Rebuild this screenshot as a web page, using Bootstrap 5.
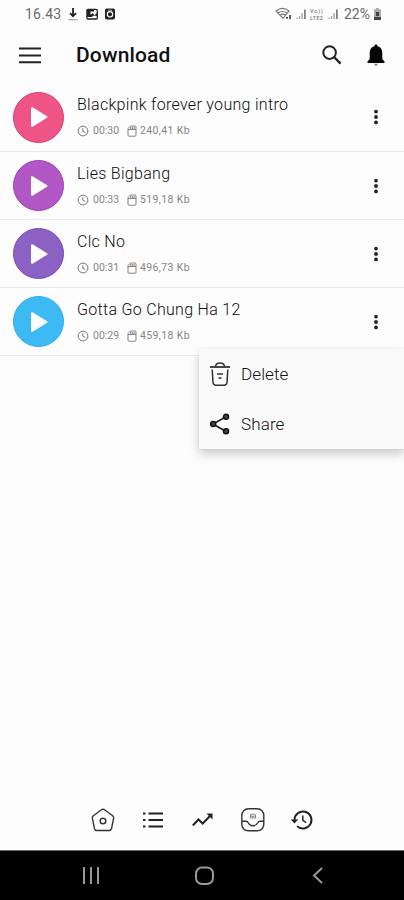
<!DOCTYPE html>
<html lang="en">
<head>
<meta charset="utf-8">
<meta name="viewport" content="width=device-width, initial-scale=1">
<title>Download</title>
<link href="https://cdn.jsdelivr.net/npm/bootstrap@5.3.0/dist/css/bootstrap.min.css" rel="stylesheet">
<style>
body{font-family:Roboto,"Liberation Sans",sans-serif;background:#fdfdfd;color:#222;line-height:1.2}
.phone{width:404px;height:900px}
svg{display:block;flex:none}
.status{height:28px;padding:0 22px 0 25px;color:#6b6b6b;font-size:14px}
.status .clock{letter-spacing:.25px;width:37px;margin-right:6px}
.status .doc{margin-left:6px}
.status .net{margin-left:3px}
.status .bars{margin-left:4px}
.status .charge{margin-left:5px;width:29px}
.topbar{height:55px;padding:0 16px 0 18px}
.topbar h1{font-size:21px;font-weight:500;color:#111;letter-spacing:.15px;margin-left:34px}
.topbar .bell{margin-left:21px}
.track{height:68px;border-bottom:1.5px solid #ebebeb;padding:0 19px 0 13px}
.track:first-child{height:69px}
.play{width:51px;height:51px;border:1px solid;margin-right:13px}
.pink{background:#ef5486;border-color:#e03a70}
.violet{background:#b158c6;border-color:#a03cb8}
.purple{background:#8b62c4;border-color:#7848b4}
.sky{background:#3dbaf4;border-color:#30a8ee}
.info{padding-bottom:2px}
.name{font-size:16px;font-weight:300;color:#0c0c0c;letter-spacing:.3px;line-height:20px;margin-bottom:10px}
.meta{font-size:10.5px;color:#858585;line-height:12px}
.meta .time{width:34px}
.meta .size{letter-spacing:.38px;margin-left:3px}
.menu{left:199px;top:61px;width:205px;height:100px;background:#fafafa;box-shadow:0 5px 10px rgba(0,0,0,.2),0 0 3px rgba(0,0,0,.06);z-index:2}
.menu a{height:50px;padding-left:9px;font-size:17px;font-weight:300;color:#111}
.menu span{margin-left:9px;letter-spacing:.12px}
.tabs{height:60px;padding:0 90px}
.sysbar{height:50px;background:#000;border-top:1px solid #666}
</style>
</head>
<body>
<svg width="0" height="0" class="position-absolute">
<symbol id="tri" viewBox="0 0 18 22"><path d="M2 2.2v17.6L16.5 11z" fill="#fff" stroke="#fff" stroke-width="2" stroke-linejoin="round"/></symbol>
<symbol id="time" viewBox="0 0 12 12"><circle cx="6" cy="6" r="4.9" fill="none" stroke="#777" stroke-width="1"/><path d="M5.8 3.2v3l2.5 1.2" fill="none" stroke="#777"/></symbol>
<symbol id="card" viewBox="0 0 10 12"><path d="M3.4 1H8a1 1 0 0 1 1 1v8.2a1 1 0 0 1-1 1H2a1 1 0 0 1-1-1V3.6zM3.7 2v2M5.4 2v2M7.1 2v2M1 4.5h8" fill="none" stroke="#777" stroke-width=".9"/></symbol>
<symbol id="dots" viewBox="0 0 18 18"><g fill="#222"><circle cx="9" cy="3.6" r="1.9"/><circle cx="9" cy="9" r="1.9"/><circle cx="9" cy="14.4" r="1.9"/></g></symbol>
<symbol id="signal" viewBox="0 0 12 12"><path d="M1 11.5V10M3.8 11.5V8.5M6.6 11.5V5" stroke="#999" stroke-width="1.3"/><path d="M9.7 11.5V1" stroke="#777" stroke-width="1.8"/></symbol>
</svg>
<main class="phone d-flex flex-column overflow-hidden">
  <div class="status d-flex align-items-center">
    <span class="clock">16.43</span>
    <svg width="10" height="14" viewBox="0 0 10 14"><path d="M5 1v8M2 6.2 5 9.3l3-3.1" fill="none" stroke="#222" stroke-width="1.8"/><path d="M.5 12.7h9" stroke="#aaa" stroke-width="1.3"/></svg>
    <svg class="ms-2" width="12" height="12" viewBox="0 0 12 12"><rect x=".9" y="1.4" width="10.4" height="9.6" rx="1.2" fill="none" stroke="#222" stroke-width="1.3"/><path d="M1 1.5h7v2H4.5v3L7 5.2l1.5 2L11 5v3L8 7.5 5.5 9H1z" fill="#222"/></svg>
    <svg class="doc" width="12" height="12" viewBox="0 0 12 12"><rect x="1" y=".5" width="10" height="11" rx="1.8" fill="#222"/><circle cx="6" cy="6.3" r="2.7" fill="none" stroke="#fff" stroke-width="1.2"/><path d="M4 2.2h4" stroke="#aaa"/></svg>
    <div class="ms-auto d-flex align-items-center">
      <svg width="17" height="13" viewBox="0 0 17 13"><g fill="none" stroke="#777" stroke-width="1.1"><path d="M1 4q6.5-5.2 13 0L8 11.5zM3 6q4.5-3 9 0M5 8q2.7-1.8 5.3 0"/></g><path d="M11 10.8h2M15 8v4" stroke="#333" stroke-width="1.6"/></svg>
      <svg class="ms-1" width="11" height="12"><use href="#signal"/></svg>
      <svg class="net" width="14" height="14" viewBox="0 0 14 14"><g fill="#777" font-size="5.5" font-weight="500"><text x="0" y="5.5" textLength="13">Vo))</text><text x="0" y="12.5" textLength="13">LTE2</text></g></svg>
      <svg class="bars" width="11" height="12"><use href="#signal"/></svg>
      <span class="charge">22%</span>
      <svg width="9" height="12" viewBox="0 0 9 12"><path d="M3 0h3v1.3h2V12H1V1.3h2z" fill="#aaa"/><path d="M1 9h7v3H1zM3 4h3v4H3z" fill="#444"/></svg>
    </div>
  </div>
  <header class="topbar d-flex align-items-center">
    <svg width="24" height="18" viewBox="0 0 24 18"><path d="M1 1.5h22M1 8.5h22M1 15.3h22" stroke="#222" stroke-width="2"/></svg>
    <h1 class="mb-0">Download</h1>
    <svg class="ms-auto" width="22" height="22" viewBox="0 0 22 22"><circle cx="8.6" cy="7.6" r="6.3" fill="none" stroke="#222" stroke-width="2"/><path d="m13 12 6.6 6.600" stroke="#222" stroke-width="2.4"/></svg>
    <svg class="bell" width="24" height="24" viewBox="0 0 24 24"><path d="M12 .5c1 0 1.6.7 1.6 1.7C17 3.1 18.3 5.8 18.3 9.5v5.6l2.2 2.3v1.500h-17v-1.500l2.200-2.300V9.500c0-3.700 1.300-6.400 4.700-7.300 0-1 .6-1.700 1.600-1.700z" fill="#050505"/><path d="M10.300 19.800h3.400a1.700 1.900 0 0 1-3.400 0z" fill="#777"/></svg>
  </header>
  <section>
    <div class="track d-flex align-items-center">
      <span class="play pink rounded-circle d-flex align-items-center justify-content-center"><svg width="18" height="22"><use href="#tri"/></svg></span>
      <div class="info"><div class="name">Blackpink forever young intro</div><div class="meta d-flex align-items-center"><svg width="12" height="12" class="me-1"><use href="#time"/></svg><span class="time">00:30</span><svg width="10" height="12"><use href="#card"/></svg><span class="size">240,41 Kb</span></div></div>
      <svg class="ms-auto" width="18" height="18"><use href="#dots"/></svg>
    </div>
    <div class="track d-flex align-items-center">
      <span class="play violet rounded-circle d-flex align-items-center justify-content-center"><svg width="18" height="22"><use href="#tri"/></svg></span>
      <div class="info"><div class="name">Lies Bigbang</div><div class="meta d-flex align-items-center"><svg width="12" height="12" class="me-1"><use href="#time"/></svg><span class="time">00:33</span><svg width="10" height="12"><use href="#card"/></svg><span class="size">519,18 Kb</span></div></div>
      <svg class="ms-auto" width="18" height="18"><use href="#dots"/></svg>
    </div>
    <div class="track d-flex align-items-center">
      <span class="play purple rounded-circle d-flex align-items-center justify-content-center"><svg width="18" height="22"><use href="#tri"/></svg></span>
      <div class="info"><div class="name">Clc No</div><div class="meta d-flex align-items-center"><svg width="12" height="12" class="me-1"><use href="#time"/></svg><span class="time">00:31</span><svg width="10" height="12"><use href="#card"/></svg><span class="size">496,73 Kb</span></div></div>
      <svg class="ms-auto" width="18" height="18"><use href="#dots"/></svg>
    </div>
    <div class="track d-flex align-items-center position-relative">
      <span class="play sky rounded-circle d-flex align-items-center justify-content-center"><svg width="18" height="22"><use href="#tri"/></svg></span>
      <div class="info"><div class="name">Gotta Go Chung Ha 12</div><div class="meta d-flex align-items-center"><svg width="12" height="12" class="me-1"><use href="#time"/></svg><span class="time">00:29</span><svg width="10" height="12"><use href="#card"/></svg><span class="size">459,18 Kb</span></div></div>
      <svg class="ms-auto" width="18" height="18"><use href="#dots"/></svg>
      <div class="menu position-absolute">
        <a class="d-flex align-items-center text-decoration-none"><svg width="24" height="26" viewBox="0 0 24 26"><g fill="none" stroke="#333" stroke-width="1.5"><path d="M2 6h20" stroke-width="1.8"/><path d="M7.500 5.500Q8 2 12 2t4.500 3.500M4.200 8.500l.8 13q.3 2.800 3 2.800h8q2.700 0 3-2.800l.8-13"/><path d="M9 13h6M10.500 17h3" stroke-width="1.600"/></g></svg><span>Delete</span></a>
        <a class="d-flex align-items-center text-decoration-none"><svg width="24" height="24" viewBox="0 0 24 24"><path d="M18 4.800 5 12l13 7.500" fill="none" stroke="#222" stroke-width="1.600"/><g fill="#444" stroke="#111" stroke-width="1.500"><circle cx="18" cy="4.800" r="2.500"/><circle cx="5.200" cy="12" r="2.500"/><circle cx="18" cy="19.300" r="2.500"/></g></svg><span>Share</span></a>
      </div>
    </div>
  </section>
  <nav class="tabs mt-auto d-flex align-items-center justify-content-between">
    <svg width="26" height="26" viewBox="0 0 26 26"><path d="M11.500 2.700q1.500-1 3 0l8.200 6q1.200.9.900 2.400l-2 10.200q-.5 2.200-2.500 2.200H6.900q-2 0-2.500-2.200l-2-10.200q-.3-1.500.9-2.400z" fill="none" stroke="#333" stroke-width="1.400"/><circle cx="13" cy="14" r="2.800" fill="none" stroke="#333" stroke-width="1.500"/></svg>
    <svg width="24" height="20" viewBox="0 0 24 20"><path d="M2 3.500h2.500M2 10h2.500M2 16.500h2.500M7.500 3.500H22M7.500 10H22M7.500 16.500H22" stroke="#222" stroke-width="2"/></svg>
    <svg width="26" height="18" viewBox="0 0 26 18"><path d="m3.800 14.500 5.700-6 4.200 4 7.800-8" fill="none" stroke="#222" stroke-width="2"/><path d="M17.500 2.500H23.500V8.500z" fill="#222"/></svg>
    <svg width="26" height="26" viewBox="0 0 26 26"><g fill="none" stroke="#333" stroke-width="1.400"><rect x="1.800" y="1.800" width="22" height="22" rx="6.500"/><path d="M2 14.200h4q1.500 0 2.200 1.500 1.500 3 4.800 3t4.800-3q.7-1.500 2.200-1.500h4"/><path d="M10.500 11V9q0-2 2.500-2t2.500 2v2zM11.500 9.300h3" stroke="#888" stroke-width="1.200"/></g></svg>
    <svg width="24" height="22" viewBox="0 0 24 22"><path d="M4.500 11a8.500 8.500 0 1 1 2.600 6.100" fill="none" stroke="#222" stroke-width="2"/><path d="M.8 10.500h7.400l-3.700 4z" fill="#222"/><path d="M12.800 6.500v4.800l3.500 2.300" fill="none" stroke="#333" stroke-width="1.600"/></svg>
  </nav>
  <div class="sysbar d-flex align-items-center">
    <svg width="404" height="24" viewBox="0 0 404 24"><g fill="none" stroke="#999" stroke-width="2"><path d="M84 3v17M91 3v17M98 3v17M322 4l-8 7.500 8 7.500"/><rect x="196" y="3.500" width="17" height="16.500" rx="6"/></g></svg>
  </div>
</main>
<script src="https://cdn.jsdelivr.net/npm/bootstrap@5.3.0/dist/js/bootstrap.bundle.min.js"></script>
</body>
</html>
